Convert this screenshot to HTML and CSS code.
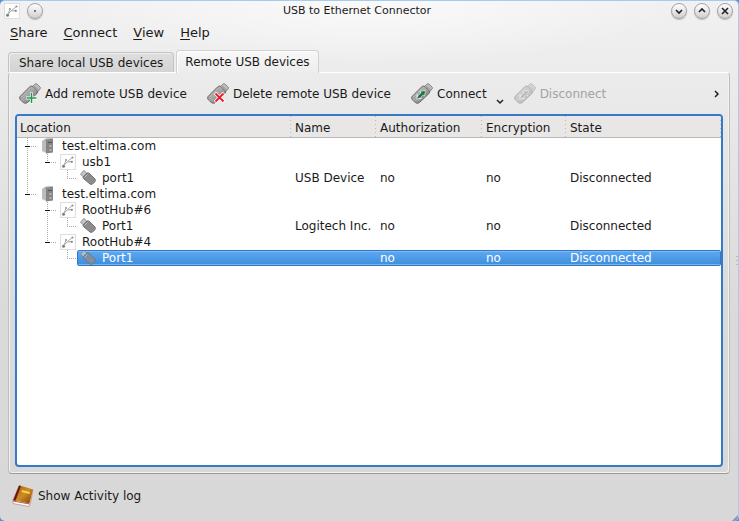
FILE: index.html
```
<!DOCTYPE html>
<html lang="en">
<head>
    <meta charset="UTF-8">
    <meta name="viewport" content="width=device-width, initial-scale=1.0">
    <title>USB to Ethernet Connector</title>
    <link rel="stylesheet" href="styles.css">
</head>
<body>

    <!-- shared icons -->
    <svg class="sprite" aria-hidden="true">
        <defs>
            <linearGradient id="metal" x1="0" y1="0" x2="1" y2="1">
                <stop offset="0" stop-color="#777"/>
                <stop offset="0.45" stop-color="#aaa"/>
                <stop offset="1" stop-color="#686868"/>
            </linearGradient>
            <linearGradient id="cover" x1="0" y1="0" x2="1" y2="1">
                <stop offset="0" stop-color="#a86410"/>
                <stop offset="0.5" stop-color="#cf8a20"/>
                <stop offset="1" stop-color="#7d4109"/>
            </linearGradient>
        </defs>
        <symbol id="stick" viewBox="0 0 22 22">
            <path d="M13 4 L16 1 Q17 0.4 18 1 L21 4 Q22 5 21 6 L18.5 9 Z" fill="#bdbdbd" stroke="#777" stroke-width="0.8"/>
            <path d="M16 3.5 L17 4.5 M18 5.5 L19 6.5" stroke="#666"/>
            <path d="M1 13.5 L11 3.5 Q12.5 2.5 14 3.6 L18 7.6 Q19.3 9 18 10.5 L8.5 19.5 Q7 20.8 5 20 L1.5 17 Q-0.2 15.5 1 13.5 Z" fill="url(#metal)" stroke="#666" stroke-width="0.9"/>
            <path d="M2.5 14 L11.5 5 Q12.5 4.3 13.5 5" fill="none" stroke="#c4c4c4"/>
        </symbol>
        <symbol id="arrow" viewBox="0 0 22 22">
            <path d="M5.5 16.5 L5.5 11 L7.5 12 L9.5 9.5 L8 8 L14.5 7 L14 13.5 L12 12 L10 14.5 L11 16 Z" fill="#e4e4e4"/>
            <path d="M6 15.8 L7.5 12.5 L10.5 9.8 L9.5 8.5 L14 8 L13.3 12.5 L12 11.5 L9.5 14.5 Z" fill="currentColor"/>
        </symbol>
        <symbol id="hub" viewBox="0 0 16 16">
            <rect x="0.5" y="0.5" width="15" height="15" fill="#fff" stroke="#dedede"/>
            <path d="M3.5 12 L6 6.5 M3.5 12 L7.5 7.5 L12.5 3.5 M7.5 8 L11.5 7.5" fill="none" stroke="#a0a0a0" stroke-width="0.9"/>
            <circle cx="3.5" cy="12.2" r="1.5" fill="#808080"/>
            <circle cx="6" cy="6" r="1" fill="#909090"/>
            <circle cx="12.5" cy="3.5" r="1.1" fill="#909090"/>
            <circle cx="11.8" cy="7.8" r="1.1" fill="#808080"/>
        </symbol>
        <symbol id="server" viewBox="0 0 16 16">
            <path d="M2 3 L6 1 L6 15 L2 13 Z" fill="#bcbcbc"/>
            <path d="M6 1 L13 0.5 L13 14.5 L6 15.5 Z" fill="#858585"/>
            <path d="M2 3 L6 0.5 L13 0.5 L6 2 Z" fill="#a9a9a9"/>
            <path d="M8 4.5 H12" stroke="#555"/>
            <path d="M9.5 8 H11.5 M9.5 12 H11.5" stroke="#e5e5e5"/>
        </symbol>
        <symbol id="port" viewBox="0 0 16 16">
            <path d="M0.5 4 L4 0.6 L7 3.5 L3.5 7 Z" fill="#c6c6c6" stroke="#8a8a8a"/>
            <path d="M3 7 L7 3 Q8 2.6 9 3.2 L15 9 Q15.8 10.2 15 11.5 L12.5 14 Q11 14.8 10 14 L3.5 8.5 Z" fill="#8c8c8c" stroke="#707070"/>
            <path d="M4.5 7.5 L7.5 4.5" stroke="#bbb"/>
        </symbol>
    </svg>

    <header class="titlebar">
        <div class="title-side">
            <svg class="app-icon" viewBox="0 0 16 16"><use href="#hub"/></svg>
            <button class="round" aria-label="Window menu"><svg viewBox="0 0 14 14"><circle cx="7" cy="7" r="1" fill="#555"/></svg></button>
        </div>
        <h1>USB to Ethernet Connector</h1>
        <div class="title-side">
            <button class="round" aria-label="Minimize"><svg viewBox="0 0 14 14"><path d="M4 6 L7 9 L10 6"/></svg></button>
            <button class="round" aria-label="Maximize"><svg viewBox="0 0 14 14"><path d="M4 8 L7 5 L10 8"/></svg></button>
            <button class="round" aria-label="Close"><svg viewBox="0 0 14 14"><path d="M4 4 L10 10 M10 4 L4 10"/></svg></button>
        </div>
    </header>

    <nav class="menubar">
        <button><u>S</u>hare</button>
        <button><u>C</u>onnect</button>
        <button><u>V</u>iew</button>
        <button><u>H</u>elp</button>
    </nav>

    <div class="tabs" role="tablist">
        <button class="tab" role="tab" aria-selected="false">Share local USB devices</button>
        <button class="tab active" role="tab" aria-selected="true">Remote USB devices</button>
    </div>

    <main class="panel">
        <div class="toolbar">
            <button class="tool">
                <svg viewBox="0 0 22 22"><use href="#stick"/><path d="M12.5 9.5 V20.5 M7 15 H18" stroke="#fff" stroke-width="3"/><path d="M12.5 10 V20 M7.5 15 H17.5" stroke="#1f9a4c" stroke-width="1.6"/></svg>
                Add remote USB device
            </button>
            <button class="tool">
                <svg viewBox="0 0 22 22"><use href="#stick"/><path d="M8 10 L17 19 M17 10 L8 19" stroke="#fff" stroke-width="3.4"/><path d="M8.5 10.5 L16.5 18.5 M16.5 10.5 L8.5 18.5" stroke="#ea1c24" stroke-width="1.8"/></svg>
                Delete remote USB device
            </button>
            <div class="split">
                <button class="tool">
                    <svg viewBox="0 0 22 22"><use href="#stick"/><use class="green" href="#arrow"/></svg>
                    Connect
                </button>
                <button class="drop" aria-label="Connect options"><svg viewBox="0 0 8 8"><path d="M1 3 L4 6 L7 3"/></svg></button>
            </div>
            <button class="tool" disabled>
                <svg viewBox="0 0 22 22"><use href="#stick"/><use class="grey" href="#arrow"/></svg>
                Disconnect
            </button>
            <button class="more" aria-label="More actions"><svg viewBox="0 0 8 8"><path d="M3 1 L6 4 L3 7"/></svg></button>
        </div>

        <div class="list">
            <table>
                <colgroup>
                    <col class="col-location">
                    <col class="col-name">
                    <col class="col-auth">
                    <col class="col-enc">
                    <col>
                </colgroup>
                <thead>
                    <tr><th>Location</th><th>Name</th><th>Authorization</th><th>Encryption</th><th>State</th></tr>
                </thead>
                <tbody>
                    <tr>
                        <td><div class="node">
                            <svg class="branch level-1" viewBox="0 0 20 16"><path class="dots" d="M10.5 0 V16 M14 8.5 H20"/><path class="dash" d="M8 8.5 H13"/></svg>
                            <span class="item"><svg viewBox="0 0 16 16"><use href="#server"/></svg>test.eltima.com</span>
                        </div></td>
                        <td></td><td></td><td></td><td></td>
                    </tr>
                    <tr>
                        <td><div class="node">
                            <svg class="branch level-2" viewBox="0 0 40 16"><path class="dots" d="M10.5 0 V16 M30.5 0 V8 M34 8.5 H40"/><path class="dash" d="M28 8.5 H33"/></svg>
                            <span class="item"><svg viewBox="0 0 16 16"><use href="#hub"/></svg>usb1</span>
                        </div></td>
                        <td></td><td></td><td></td><td></td>
                    </tr>
                    <tr>
                        <td><div class="node">
                            <svg class="branch level-3" viewBox="0 0 60 16"><path class="dots" d="M10.5 0 V16 M50.5 0 V8 M50 8.5 H60"/></svg>
                            <span class="item"><svg viewBox="0 0 16 16"><use href="#port"/></svg>port1</span>
                        </div></td>
                        <td>USB Device</td><td>no</td><td>no</td><td>Disconnected</td>
                    </tr>
                    <tr>
                        <td><div class="node">
                            <svg class="branch level-1" viewBox="0 0 20 16"><path class="dots" d="M10.5 0 V8 M14 8.5 H20"/><path class="dash" d="M8 8.5 H13"/></svg>
                            <span class="item"><svg viewBox="0 0 16 16"><use href="#server"/></svg>test.eltima.com</span>
                        </div></td>
                        <td></td><td></td><td></td><td></td>
                    </tr>
                    <tr>
                        <td><div class="node">
                            <svg class="branch level-2" viewBox="0 0 40 16"><path class="dots" d="M30.5 0 V16 M34 8.5 H40"/><path class="dash" d="M28 8.5 H33"/></svg>
                            <span class="item"><svg viewBox="0 0 16 16"><use href="#hub"/></svg>RootHub#6</span>
                        </div></td>
                        <td></td><td></td><td></td><td></td>
                    </tr>
                    <tr>
                        <td><div class="node">
                            <svg class="branch level-3" viewBox="0 0 60 16"><path class="dots" d="M30.5 0 V16 M50.5 0 V8 M50 8.5 H60"/></svg>
                            <span class="item"><svg viewBox="0 0 16 16"><use href="#port"/></svg>Port1</span>
                        </div></td>
                        <td>Logitech Inc.</td><td>no</td><td>no</td><td>Disconnected</td>
                    </tr>
                    <tr>
                        <td><div class="node">
                            <svg class="branch level-2" viewBox="0 0 40 16"><path class="dots" d="M30.5 0 V8 M34 8.5 H40"/><path class="dash" d="M28 8.5 H33"/></svg>
                            <span class="item"><svg viewBox="0 0 16 16"><use href="#hub"/></svg>RootHub#4</span>
                        </div></td>
                        <td></td><td></td><td></td><td></td>
                    </tr>
                    <tr class="selected" aria-selected="true">
                        <td><div class="node">
                            <svg class="branch level-3" viewBox="0 0 60 16"><path class="dots" d="M50.5 0 V8 M50 8.5 H60"/></svg>
                            <span class="item"><svg viewBox="0 0 16 16"><use href="#port"/></svg>Port1</span>
                        </div></td>
                        <td></td><td>no</td><td>no</td><td>Disconnected</td>
                    </tr>
                </tbody>
            </table>
        </div>
    </main>

    <footer class="statusbar">
        <button class="tool">
            <svg viewBox="0 0 22 22">
                <path d="M7 1 L0.5 16 L1 18.5 L17 21.5 L18.5 18 L21 5 Z" fill="#fff" stroke="#c98a86" stroke-width="0.8"/>
                <path d="M7.5 0.5 L21 4.5 L17.5 18.5 L2.5 15.5 Z" fill="url(#cover)"/>
                <path d="M7 0.5 L9 1 L3.5 15.8 L1 15.5 Z" fill="#6b1a10"/>
                <path d="M10 5 L18 7 L17.6 9 L9.4 7 Z" fill="#f2d257"/>
                <path d="M1 16 L17.5 19" stroke="#8c3a30" stroke-width="0.8"/>
            </svg>
            Show Activity log
        </button>
    </footer>

    <svg class="grip-side" viewBox="0 0 2 10" aria-hidden="true"><path d="M1 0 V10"/></svg>
    <svg class="grip-corner" viewBox="0 0 6 6" aria-hidden="true"><path d="M6 0 V6 H0 Z"/></svg>

</body>
</html>
```
FILE: styles.css
```
* {
    box-sizing: border-box;
}

html {
    background: #5b8fd0;
}

body {
    display: flex;
    flex-direction: column;
    position: relative;
    height: 100vh;
    margin: 0;
    overflow: hidden;
    border-top: 1px solid #a5cbf0;
    border-right: 1px solid #a5cbf0;
    border-radius: 5px;
    background:
        radial-gradient(ellipse 300px 64px at 50% 0, #fafafa, rgba(250, 250, 250, 0)),
        linear-gradient(#f1f1f1, #ebebeb 80px, #dadada 310px, #d8d8d8);
    font-family: "DejaVu Sans", sans-serif;
    font-size: 12px;
    line-height: 16px;
    color: #1a1a1a;
}

button {
    margin: 0;
    padding: 0;
    border: 0;
    background: none;
    font: inherit;
    color: inherit;
    white-space: nowrap;
}

svg {
    display: block;
    flex: none;
}

.sprite {
    position: absolute;
    width: 0;
    height: 0;
}

.titlebar {
    display: flex;
    align-items: center;
    height: 20px;
    padding: 0 5px 0 4px;
}

.titlebar h1 {
    flex: 1;
    margin: 0;
    font-size: 11px;
    font-weight: normal;
    text-align: center;
}

.title-side {
    display: flex;
    align-items: center;
    gap: 7px;
}

.app-icon {
    width: 16px;
    height: 16px;
}

.round {
    width: 16px;
    height: 16px;
    border: 1px solid #a2a2a2;
    border-radius: 50%;
    background: linear-gradient(#fff, #cfcfcf);
    box-shadow: 0 1px 1px #bbb;
}

.round svg {
    width: 14px;
    height: 14px;
}

.round path {
    fill: none;
    stroke: #222;
    stroke-width: 1.6;
}

.menubar {
    display: flex;
    gap: 16px;
    padding: 4px 10px 9px;
    font-size: 13px;
}

.menubar u {
    text-underline-offset: 2px;
}

.tabs {
    display: flex;
    align-items: flex-end;
    gap: 2px;
    padding-left: 8px;
}

.tab {
    height: 20px;
    padding: 0 10px;
    border: 1px solid #c4c4c4;
    border-bottom: 0;
    border-radius: 4px 4px 0 0;
    background: linear-gradient(#e0dfdf, #d4d3d3);
    box-shadow: inset 1px 1px #eee;
}

.tab.active {
    position: relative;
    height: 23px;
    margin-bottom: -1px;
    padding: 0 8px;
    border-color: #d0d0d0;
    background: linear-gradient(#f8f8f8, #ececec);
    box-shadow: inset 1px 1px #fff;
}

.panel {
    display: flex;
    flex: 1;
    flex-direction: column;
    min-height: 0;
    margin: 0 8px;
    padding: 0 6px 6px;
    border: 1px solid #bdbdbd;
    border-top-color: #fff;
    border-bottom-color: #999;
    border-radius: 4px;
    box-shadow: inset 1px 0 #f2f2f2, inset -1px -1px #f2f2f2;
}

.toolbar {
    display: flex;
    align-items: center;
    gap: 20px;
    height: 41px;
    padding: 0 3px 0 4px;
}

.tool {
    display: flex;
    align-items: center;
    gap: 4px;
}

.tool svg {
    width: 22px;
    height: 22px;
}

.tool:disabled {
    color: #a3a3a3;
}

.tool:disabled svg {
    opacity: 0.45;
}

.green {
    color: #137a3d;
}

.grey {
    color: #888;
}

.split {
    display: flex;
    align-items: flex-end;
    gap: 9px;
    margin-right: -10px;
}

.drop svg,
.more svg {
    width: 8px;
    height: 8px;
    fill: none;
    stroke: #222;
    stroke-width: 1.5;
}

.more {
    margin-left: auto;
}

.list {
    flex: 1;
    min-height: 0;
    overflow: hidden;
    border: 2px solid #3579c8;
    border-radius: 4px;
    background: #fff;
}

table {
    width: 100%;
    table-layout: fixed;
    border-collapse: separate;
    border-spacing: 0;
}

.col-location {
    width: 274px;
}

.col-name {
    width: 85px;
}

.col-auth {
    width: 106px;
}

.col-enc {
    width: 84px;
}

th {
    height: 22px;
    padding: 2px 0 0 4px;
    border-bottom: 1px solid #b8b8b8;
    background:
        linear-gradient(#b8b8b8 1px, transparent 1px) right top / 1px 4px repeat-y,
        #e8e7e6;
    font-weight: normal;
    text-align: left;
}

td {
    height: 16px;
    padding: 0 0 0 4px;
    line-height: 16px;
    white-space: nowrap;
}

th:first-child {
    padding-left: 3px;
}

td:first-child {
    padding: 0;
}

.node {
    display: flex;
    height: 16px;
}

.branch {
    height: 16px;
}

.level-1 {
    width: 20px;
}

.level-2 {
    width: 40px;
}

.level-3 {
    width: 60px;
}

.dots {
    fill: none;
    stroke: #aaa;
    stroke-dasharray: 1 1;
}

.dash {
    stroke: #111;
}

.item {
    display: flex;
    flex: 1;
    gap: 6px;
    padding-left: 3px;
}

.item svg {
    width: 16px;
    height: 16px;
}

.selected {
    color: #fff;
}

.selected td:not(:first-child),
.selected .item {
    background: linear-gradient(#2f78c6 1px, #82b9f2 1px, #82b9f2 2px, #5ba6f3 2px, #4090dd 14px, #7ab2ea 14px, #7ab2ea 15px, #2f78c6 15px);
}

.selected .item {
    border-radius: 3px 0 0 3px;
    box-shadow: inset 1px 0 #2f78c6;
}

.selected td:last-child {
    border-radius: 0 3px 3px 0;
    box-shadow: inset -1px 0 #2f78c6;
}

.selected .item svg {
    opacity: 0.8;
}

.statusbar {
    display: flex;
    align-items: center;
    height: 47px;
    padding: 0 12px 4px;
}

/* resize grips drawn over the window frame */
.grip-side {
    position: absolute;
    top: 255px;
    right: 0;
    width: 2px;
    height: 10px;
    stroke: #8a9db0;
    stroke-dasharray: 1 3;
}

.grip-corner {
    position: absolute;
    right: 0;
    bottom: 0;
    width: 6px;
    height: 6px;
    fill: #7299c4;
}
```
